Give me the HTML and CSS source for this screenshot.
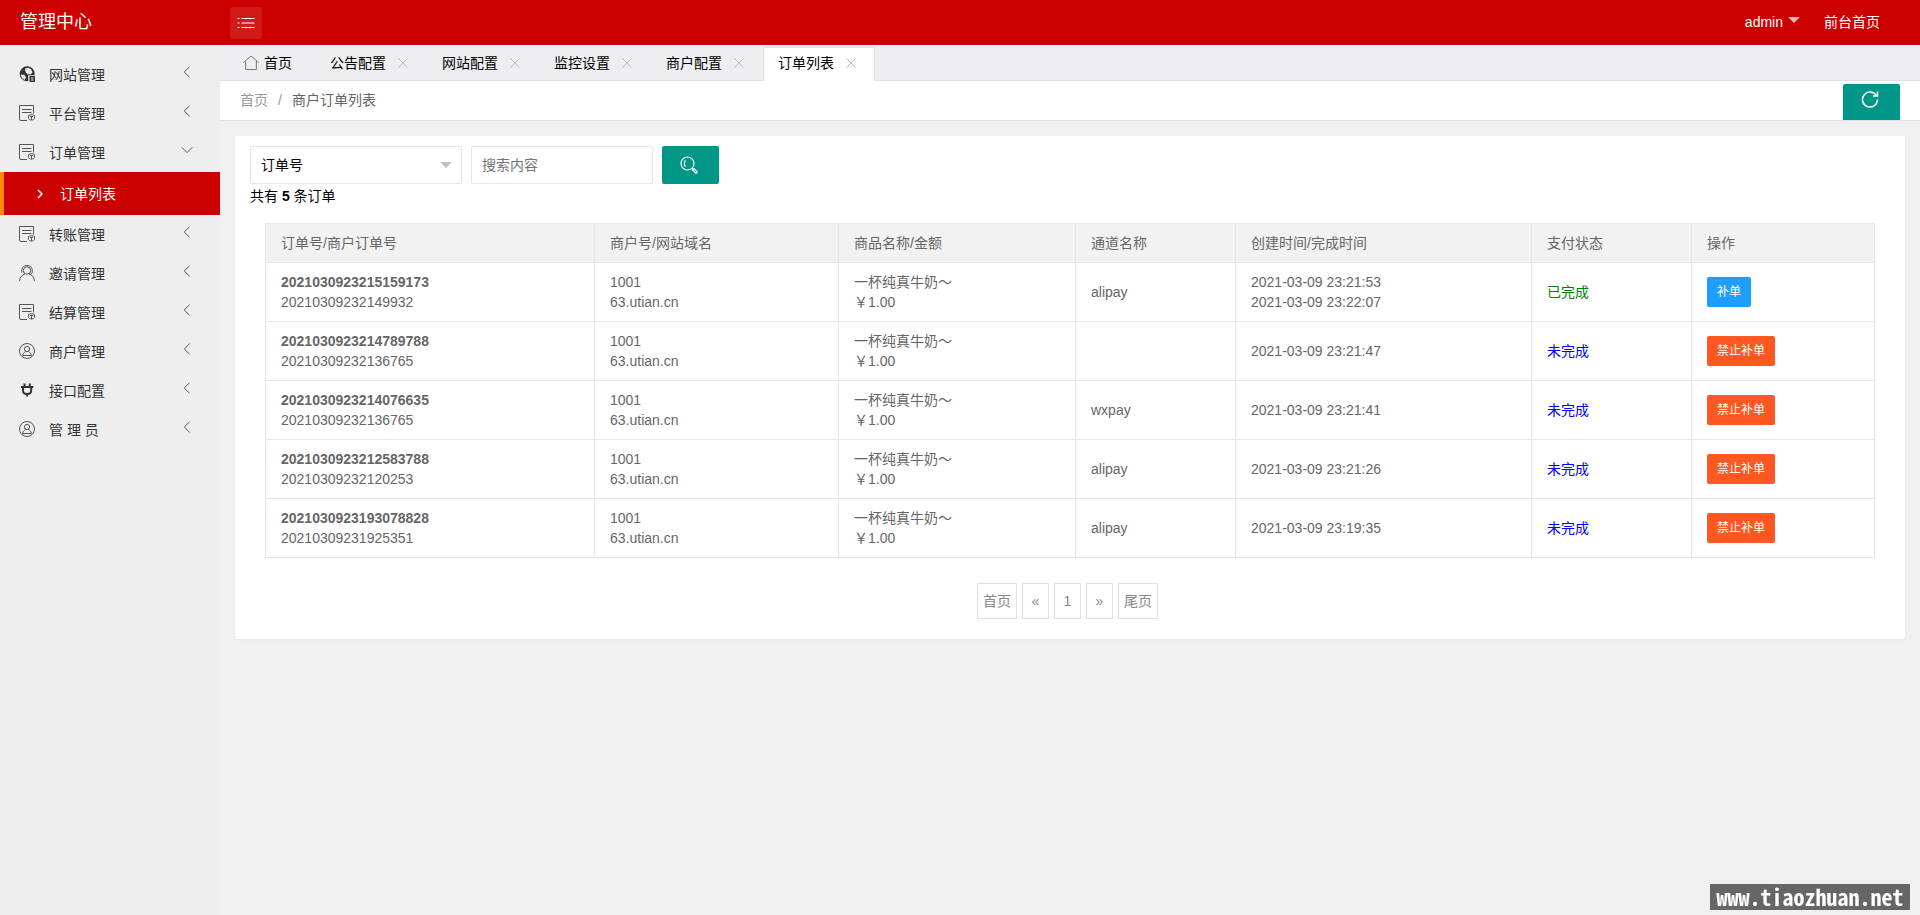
FILE: index.html
```html
<!DOCTYPE html>
<html lang="zh-CN">
<head>
<meta charset="utf-8">
<title>管理中心</title>
<link rel="stylesheet" href="styles.css">
</head>
<body>
<svg class="sprite" aria-hidden="true">
  <symbol id="i-left" viewBox="0 0 12 12"><path d="M8.500 .8 3.200 6l5.300 5.200"/></symbol>
  <symbol id="i-down" viewBox="0 0 12 12"><path d="M.8 3.300 6 8.600l5.200-5.300"/></symbol>
  <symbol id="i-form" viewBox="0 0 16 16"><path d="M8 15.500H2A1.500 1.500 0 0 1 .5 14V.5H14.500V8.500M3 4.500h9.500M3 7.500h9.500"/><path d="M9.500 10.500c1-1 5-1 6 0v3c-.5 2-5.500 2-6 0zM11 11.500h3M12.500 11.500v3.500"/></symbol>
  <symbol id="i-user" viewBox="0 0 16 16"><circle cx="8" cy="8" r="7.500"/><circle cx="8" cy="6" r="2.600"/><path d="M3.600 12.500C4 10 5.500 9.200 6.600 8.500M9.400 8.500c1.100.7 2.600 1.500 3 4M3.600 12.500h8.800"/></symbol>
  <symbol id="i-x" viewBox="0 0 10 10"><path d="M.5.500l9 9M9.500.500l-9 9"/></symbol>
</svg>
<header class="header">
  <h1 class="brand">管理中心</h1>
  <button class="toggle" type="button" aria-label="折叠菜单"><svg class="ic" viewBox="0 0 18 12"><path d="M4.500 1.500H17.500M4.500 6H17.500M4.500 10.500H17.500M.5 1.500h2M.5 6h2M.5 10.500h2"/></svg></button>
  <nav class="top-nav">
    <a href="#">admin<span class="tri"></span></a>
    <a href="#">前台首页</a>
  </nav>
</header>
<div class="layout">
  <aside class="side">
    <a class="item" href="#"><svg class="ic" viewBox="0 0 16 16"><circle class="solid" cx="8.200" cy="7.800" r="7.500"/><path class="hole" d="M6 2.500 9.500 1.800l2.500 1.400 1.500 3-1.500 2H8.500L6.500 6zM1.800 8.500l3.700.5 1.500 2.500L5.500 14C3.500 13 2 11 1.800 8.500zM9.200 9.200H16V16H9.200z"/><path class="solid" d="M10.500 10H16v6h-5.500z"/><path class="hole" d="M12 11.500h2.500v1H12zM12 13.600h2.500v1H12z"/></svg><span>网站管理</span><svg class="arrow"><use href="#i-left"/></svg></a>
    <a class="item" href="#"><svg class="ic"><use href="#i-form"/></svg><span>平台管理</span><svg class="arrow"><use href="#i-left"/></svg></a>
    <a class="item" href="#"><svg class="ic"><use href="#i-form"/></svg><span>订单管理</span><svg class="arrow"><use href="#i-down"/></svg></a>
    <a class="sub" href="#"><svg class="caret" viewBox="0 0 6 10"><path d="M1 1l4 4-4 4"/></svg><span>订单列表</span></a>
    <a class="item" href="#"><svg class="ic"><use href="#i-form"/></svg><span>转账管理</span><svg class="arrow"><use href="#i-left"/></svg></a>
    <a class="item" href="#"><svg class="ic" viewBox="0 0 16 16"><circle cx="8" cy="5.500" r="3.700"/><path d="M.5 16C1 11.800 3.200 10 6 8.800M10 8.800c2.800 1.200 5 3 5.500 7.200M2.800 7.500V4.200C3.500 1.500 5.500.5 8 .5s4.500 1 5.200 3.700V7.500c-.5 1.200-1.500 1.800-2.700 2"/></svg><span>邀请管理</span><svg class="arrow"><use href="#i-left"/></svg></a>
    <a class="item" href="#"><svg class="ic"><use href="#i-form"/></svg><span>结算管理</span><svg class="arrow"><use href="#i-left"/></svg></a>
    <a class="item" href="#"><svg class="ic"><use href="#i-user"/></svg><span>商户管理</span><svg class="arrow"><use href="#i-left"/></svg></a>
    <a class="item" href="#"><svg class="ic bold" viewBox="0 0 16 16"><path d="M5.500 1.500v3M10.800 1.500v3M2 5h12.300M4 5.500v3c0 2 1.600 3.500 4.100 3.500s4.100-1.500 4.100-3.500v-3M8.100 12v2.500"/></svg><span>接口配置</span><svg class="arrow"><use href="#i-left"/></svg></a>
    <a class="item" href="#"><svg class="ic"><use href="#i-user"/></svg><span>管 理 员</span><svg class="arrow"><use href="#i-left"/></svg></a>
  </aside>
  <main class="main">
    <nav class="tabs">
      <a class="tab home" href="#"><svg class="ic" viewBox="0 0 16 16"><path d="M.4 7.600 8 1l7.600 6.600M2.600 6v8.500H13.400V6"/></svg>首页</a>
      <div class="tab"><a href="#">公告配置</a><button type="button" aria-label="关闭公告配置"><svg><use href="#i-x"/></svg></button></div>
      <div class="tab"><a href="#">网站配置</a><button type="button" aria-label="关闭网站配置"><svg><use href="#i-x"/></svg></button></div>
      <div class="tab"><a href="#">监控设置</a><button type="button" aria-label="关闭监控设置"><svg><use href="#i-x"/></svg></button></div>
      <div class="tab"><a href="#">商户配置</a><button type="button" aria-label="关闭商户配置"><svg><use href="#i-x"/></svg></button></div>
      <div class="tab active"><a href="#">订单列表</a><button type="button" aria-label="关闭订单列表"><svg><use href="#i-x"/></svg></button></div>
    </nav>
    <div class="crumbs">
      <a href="#">首页</a><span class="slash">/</span><span>商户订单列表</span>
      <button class="refresh" type="button" aria-label="刷新"><svg class="ic" viewBox="0 0 18 18"><path d="M15.500 5.800A7.500 7.500 0 1 0 16.500 9.500M16.500 1.500V6H12"/></svg></button>
    </div>
    <section class="card">
      <form class="search">
        <div class="pick"><select aria-label="搜索类型"><option>订单号</option></select></div>
        <input type="text" placeholder="搜索内容" aria-label="搜索内容">
        <button class="go" type="button" aria-label="搜索"><svg class="ic" viewBox="0 0 18 18"><circle cx="7.500" cy="7.500" r="6.500"/><path d="M5.500 4.500C4 6 4 9 5.500 10.500M12 12l1.300 1.300"/><path d="M12.600 14 14 12.600l3 3c.6.8-.6 2-1.400 1.400z"/></svg></button>
      </form>
      <p class="count">共有 <b>5</b> 条订单</p>
      <div class="table-wrap">
        <table>
          <colgroup><col class="c-order"><col class="c-shop"><col class="c-goods"><col class="c-short"><col class="c-time"><col class="c-short"><col></colgroup>
          <thead><tr><th>订单号/商户订单号</th><th>商户号/网站域名</th><th>商品名称/金额</th><th>通道名称</th><th>创建时间/完成时间</th><th>支付状态</th><th>操作</th></tr></thead>
          <tbody>
            <tr><td><b>2021030923215159173</b><br>20210309232149932</td><td>1001<br>63.utian.cn</td><td>一杯纯真牛奶～<br>￥1.00</td><td>alipay</td><td>2021-03-09 23:21:53<br>2021-03-09 23:22:07</td><td class="done">已完成</td><td><button class="btn blue" type="button">补单</button></td></tr>
            <tr><td><b>2021030923214789788</b><br>20210309232136765</td><td>1001<br>63.utian.cn</td><td>一杯纯真牛奶～<br>￥1.00</td><td></td><td>2021-03-09 23:21:47</td><td class="todo">未完成</td><td><button class="btn" type="button">禁止补单</button></td></tr>
            <tr><td><b>2021030923214076635</b><br>20210309232136765</td><td>1001<br>63.utian.cn</td><td>一杯纯真牛奶～<br>￥1.00</td><td>wxpay</td><td>2021-03-09 23:21:41</td><td class="todo">未完成</td><td><button class="btn" type="button">禁止补单</button></td></tr>
            <tr><td><b>2021030923212583788</b><br>20210309232120253</td><td>1001<br>63.utian.cn</td><td>一杯纯真牛奶～<br>￥1.00</td><td>alipay</td><td>2021-03-09 23:21:26</td><td class="todo">未完成</td><td><button class="btn" type="button">禁止补单</button></td></tr>
            <tr><td><b>2021030923193078828</b><br>20210309231925351</td><td>1001<br>63.utian.cn</td><td>一杯纯真牛奶～<br>￥1.00</td><td>alipay</td><td>2021-03-09 23:19:35</td><td class="todo">未完成</td><td><button class="btn" type="button">禁止补单</button></td></tr>
          </tbody>
        </table>
      </div>
      <nav class="pages"><a href="#">首页</a><a href="#">«</a><a href="#">1</a><a href="#">»</a><a href="#">尾页</a></nav>
    </section>
  </main>
</div>
<div class="mark">www.tiaozhuan.net</div>
</body>
</html>
```
FILE: styles.css
```css
* { box-sizing: border-box; }
body {
  margin: 0;
  min-height: 100vh;
  display: flex;
  flex-direction: column;
  background: #f0f0f0;
  color: #000;
  font: 14px/24px "Liberation Sans", "Noto Sans CJK SC", sans-serif;
}
a { color: inherit; text-decoration: none; }
button, input, select { font: inherit; margin: 0; }
button { border: 0; padding: 0; cursor: pointer; display: flex; align-items: center; justify-content: center; }
svg { flex: none; fill: none; stroke: currentColor; }
.sprite { display: none; }
.ic { width: 16px; height: 16px; }

.header { display: flex; align-items: center; height: 45px; padding: 0 40px 0 20px; background: #c00; color: #fff; }
.brand { width: 210px; margin: 0; padding-bottom: 2px; font-size: 18px; font-weight: 400; }
.toggle { width: 32px; height: 32px; border-radius: 3px; background: #d11a1a; color: #fff; }
.toggle .ic { width: 18px; height: 12px; }
.top-nav { display: flex; gap: 24px; margin-left: auto; padding-bottom: 2px; }
.top-nav a { display: flex; align-items: center; }
.tri { margin: 0 0 3px 5px; border: 6px solid transparent; border-top-color: #f0b3b3; border-bottom: 0; }

.layout { flex: 1; display: flex; }
.side { width: 220px; padding-top: 10px; background: #eee; color: #333; }
.item { display: flex; align-items: center; height: 39px; padding: 0 27px 0 19px; }
.item .ic { margin: 0 14px 1px 0; color: #555; }
.item .bold { stroke-width: 2; color: #333; }
.arrow { width: 12px; height: 12px; margin: 0 0 5px auto; color: #555; }
.solid { fill: #333; stroke: none; }
.hole { fill: #eee; stroke: none; }
.sub { display: flex; align-items: center; height: 43px; padding-left: 33px; border-left: 4px solid #ff8c00; background: #c00; color: #fff; }
.caret { width: 6px; height: 10px; margin-right: 17px; stroke-width: 1.500; }

.main { flex: 1; min-width: 0; }
.tabs { display: flex; align-items: stretch; height: 36px; padding: 2px 0 0 8px; border-bottom: 1px solid #e2e2e2; background: #eeeef0; }
.tab { display: flex; align-items: center; width: 112px; padding: 0 14px 3px; border: 1px solid transparent; border-bottom: 0; }
.home { width: 87px; gap: 5px; }
.home .ic { color: #777; }
.tab button { width: 16px; height: 16px; margin-left: 9px; background: none; color: #bbb; }
.tab button svg { width: 10px; height: 10px; }
.active { margin-bottom: -1px; border-color: #e2e2e2; background: #fff; }
.crumbs { display: flex; align-items: center; height: 40px; padding: 0 20px 2px; border-bottom: 1px solid #e2e2e2; background: #fff; color: #666; }
.crumbs a, .slash { color: #999; }
.slash { padding: 0 10px; }
.refresh { align-self: flex-end; width: 57px; height: 36px; margin: 0 0 -2px auto; padding: 0 3px 6px 0; border-radius: 2px 2px 0 0; background: #009688; color: #fff; }
.refresh .ic, .go .ic { width: 18px; height: 18px; }
.refresh path { stroke-width: 1.500; }

.card { margin: 15px; padding: 10px 15px 20px; border-radius: 2px; background: #fff; box-shadow: 0 1px 2px rgba(0, 0, 0, .05); }
.search { display: flex; gap: 9px; height: 38px; }
.pick { position: relative; width: 212px; }
.pick::after { content: ""; position: absolute; right: 10px; top: 16px; border: 6px solid transparent; border-top-color: #c2c2c2; border-bottom: 0; pointer-events: none; }
.search select, .search input { height: 38px; padding: 0 10px; border: 1px solid #e6e6e6; border-radius: 2px; background: #fff; color: #000; }
.search select { width: 100%; appearance: none; }
.search input { width: 182px; }
.search input::placeholder { color: #757575; }
.go { width: 57px; padding-right: 3px; border-radius: 2px; background: #009688; color: #fff; }
.go .ic { stroke-width: 1.200; }
.count { margin: 0; }

.table-wrap { padding: 15px; color: #666; line-height: 20px; }
table { width: 100%; table-layout: fixed; border-collapse: collapse; }
th, td { padding: 9px 15px; border: 1px solid #e6e6e6; text-align: left; font-weight: 400; }
th { background: #f2f2f2; }
td:last-child { padding-block: 0; }
.c-order { width: 329px; }
.c-shop { width: 244px; }
.c-goods { width: 237px; }
.c-short { width: 160px; }
.c-time { width: 296px; }
.done { color: green; }
.todo { color: blue; }
.btn { height: 30px; padding: 0 10px; border-radius: 2px; background: #ff5722; color: #fff; font-size: 12px; }
.blue { background: #1e9fff; }

.pages { display: flex; justify-content: center; padding-top: 10px; color: #888; }
.pages a { min-width: 27px; height: 36px; margin-right: 5px; padding: 0 5px; border: 1px solid #e2e2e2; line-height: 34px; text-align: center; }

.mark { position: fixed; right: 10px; bottom: 5px; width: 200px; height: 26px; background: #666; color: #fff; font: bold 22px/24px "Noto Sans Mono CJK SC", "DejaVu Sans Mono", monospace; text-align: center; }
```
